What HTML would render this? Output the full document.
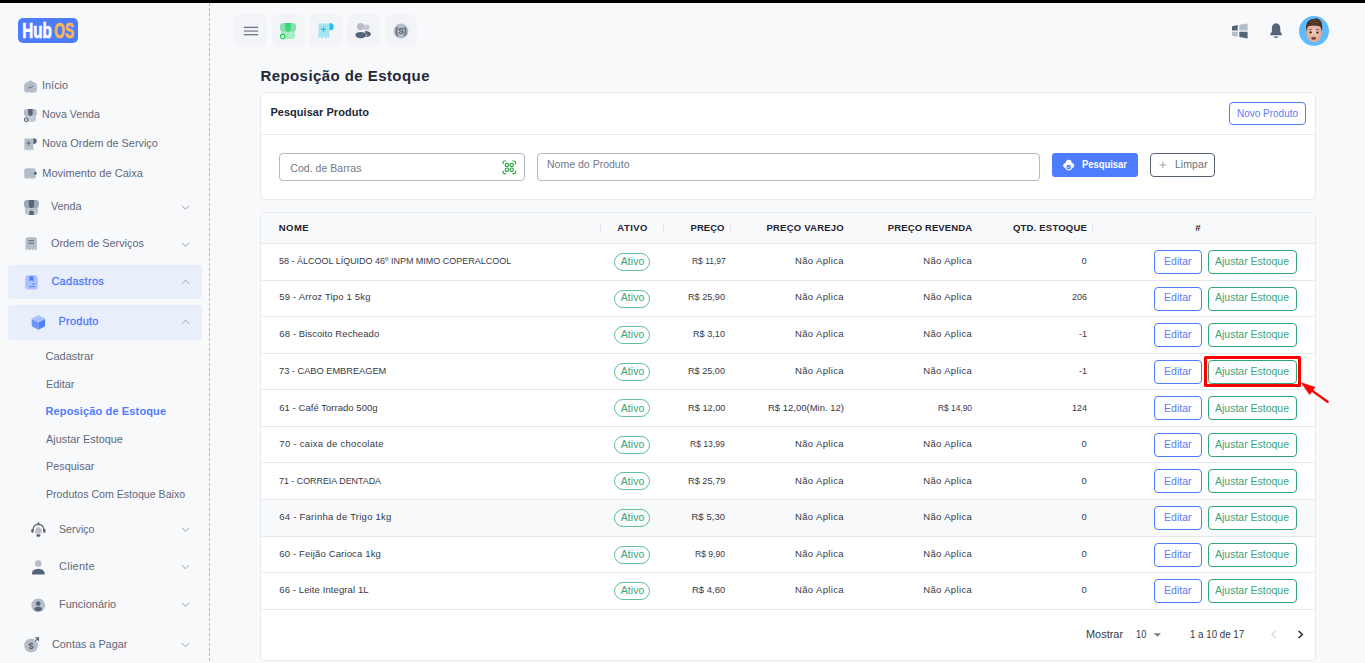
<!DOCTYPE html>
<html><head><meta charset="utf-8"><title>Reposição de Estoque</title>
<style>
html,body{margin:0;padding:0;}
body{width:1365px;height:663px;overflow:hidden;background:#f8f9fb;position:relative;font-family:"Liberation Sans",sans-serif;}
.t{position:absolute;white-space:pre;line-height:1;display:block;}
.r{position:absolute;box-sizing:border-box;display:block;}
</style></head><body>
<div class="r" style="left:0px;top:0px;width:1365px;height:3px;background:#000;"></div>
<div class="r" style="left:0px;top:3px;width:1365px;height:1px;background:#fdfdfe;"></div>
<div class="r" style="left:209px;top:3px;width:1px;height:660px;background:repeating-linear-gradient(to bottom,#b3bcc8 0,#b3bcc8 3px,transparent 3px,transparent 5px);"></div>
<div class="r" style="left:18px;top:18px;width:60px;height:25px;background:#4d7cfe;border-radius:5px;"></div>
<svg class="r" style="left:18px;top:18px" width="60" height="25" viewBox="0 0 60 25">
<text x="4.3" y="20.4" font-family="Liberation Sans" font-weight="700" font-size="22.4" fill="#fff" textLength="29.6" lengthAdjust="spacingAndGlyphs" stroke="#fff" stroke-width="0.7">Hub</text>
<text x="36.3" y="20.4" font-family="Liberation Sans" font-weight="700" font-size="22.4" fill="#ffb74d" textLength="19.8" lengthAdjust="spacingAndGlyphs" stroke="#ffb74d" stroke-width="0.7">OS</text>
</svg>
<span class="t" style="left:42.20px;top:80.00px;font-size:11px;font-weight:400;color:#626779;transform:scaleX(0.9928);transform-origin:0 0;">Início</span>
<span class="t" style="left:42.20px;top:109.00px;font-size:11px;font-weight:400;color:#626779;transform:scaleX(0.9661);transform-origin:0 0;">Nova Venda</span>
<span class="t" style="left:42.20px;top:138.00px;font-size:11px;font-weight:400;color:#626779;transform:scaleX(0.9866);transform-origin:0 0;">Nova Ordem de Serviço</span>
<span class="t" style="left:42.20px;top:168.00px;font-size:11px;font-weight:400;color:#626779;letter-spacing:0.030px;">Movimento de Caixa</span>
<span class="t" style="left:51.40px;top:201.00px;font-size:11px;font-weight:400;color:#626779;transform:scaleX(0.9776);transform-origin:0 0;">Venda</span>
<span class="t" style="left:51.40px;top:238.00px;font-size:11px;font-weight:400;color:#626779;transform:scaleX(0.9868);transform-origin:0 0;">Ordem de Serviços</span>
<div class="r" style="left:8px;top:265px;width:194px;height:34px;background:#e9eefb;border-radius:4px;"></div>
<span class="t" style="left:51.40px;top:276.00px;font-size:11px;font-weight:400;color:#4d7cfe;letter-spacing:0.285px;-webkit-text-stroke:0.3px #4d7cfe;">Cadastros</span>
<div class="r" style="left:8px;top:305px;width:194px;height:35px;background:#e9eefb;border-radius:4px;"></div>
<span class="t" style="left:58.50px;top:316.00px;font-size:11px;font-weight:400;color:#4d7cfe;letter-spacing:0.239px;-webkit-text-stroke:0.3px #4d7cfe;">Produto</span>
<span class="t" style="left:45.50px;top:351.00px;font-size:11px;font-weight:400;color:#626779;letter-spacing:0.001px;">Cadastrar</span>
<span class="t" style="left:45.50px;top:379.00px;font-size:11px;font-weight:400;color:#626779;transform:scaleX(0.9884);transform-origin:0 0;">Editar</span>
<span class="t" style="left:45.50px;top:406.00px;font-size:11px;font-weight:700;color:#4d7cfe;letter-spacing:0.137px;">Reposição de Estoque</span>
<span class="t" style="left:45.50px;top:434.00px;font-size:11px;font-weight:400;color:#626779;transform:scaleX(0.9903);transform-origin:0 0;">Ajustar Estoque</span>
<span class="t" style="left:45.50px;top:461.00px;font-size:11px;font-weight:400;color:#626779;transform:scaleX(0.9875);transform-origin:0 0;">Pesquisar</span>
<span class="t" style="left:45.50px;top:489.00px;font-size:11px;font-weight:400;color:#626779;transform:scaleX(0.9640);transform-origin:0 0;">Produtos Com Estoque Baixo</span>
<span class="t" style="left:59.10px;top:524.00px;font-size:11px;font-weight:400;color:#626779;transform:scaleX(0.9679);transform-origin:0 0;">Serviço</span>
<span class="t" style="left:59.10px;top:561.00px;font-size:11px;font-weight:400;color:#626779;letter-spacing:0.223px;">Cliente</span>
<span class="t" style="left:59.10px;top:599.00px;font-size:11px;font-weight:400;color:#626779;transform:scaleX(0.9953);transform-origin:0 0;">Funcionário</span>
<span class="t" style="left:51.70px;top:639.00px;font-size:11px;font-weight:400;color:#626779;transform:scaleX(0.9852);transform-origin:0 0;">Contas a Pagar</span>
<svg class="r" style="left:0;top:0" width="210" height="663"><path d="M182.0,205.7 L185.5,209.3 L189.0,205.7" fill="none" stroke="#9aa0ad" stroke-width="1"/></svg>
<svg class="r" style="left:0;top:0" width="210" height="663"><path d="M182.0,242.7 L185.5,246.3 L189.0,242.7" fill="none" stroke="#9aa0ad" stroke-width="1"/></svg>
<svg class="r" style="left:0;top:0" width="210" height="663"><path d="M182.0,283.8 L185.5,280.2 L189.0,283.8" fill="none" stroke="#9aa0ad" stroke-width="1"/></svg>
<svg class="r" style="left:0;top:0" width="210" height="663"><path d="M182.0,323.8 L185.5,320.2 L189.0,323.8" fill="none" stroke="#9aa0ad" stroke-width="1"/></svg>
<svg class="r" style="left:0;top:0" width="210" height="663"><path d="M182.0,527.9000000000001 L185.5,531.5 L189.0,527.9000000000001" fill="none" stroke="#9aa0ad" stroke-width="1"/></svg>
<svg class="r" style="left:0;top:0" width="210" height="663"><path d="M182.0,565.2 L185.5,568.8 L189.0,565.2" fill="none" stroke="#9aa0ad" stroke-width="1"/></svg>
<svg class="r" style="left:0;top:0" width="210" height="663"><path d="M182.0,602.7 L185.5,606.3 L189.0,602.7" fill="none" stroke="#9aa0ad" stroke-width="1"/></svg>
<svg class="r" style="left:0;top:0" width="210" height="663"><path d="M182.0,643.2 L185.5,646.8 L189.0,643.2" fill="none" stroke="#9aa0ad" stroke-width="1"/></svg>
<div class="r" style="left:234px;top:14px;width:33px;height:33px;background:#f3f4f7;border-radius:7px;"></div>
<div class="r" style="left:272px;top:14px;width:33px;height:33px;background:#f3f4f7;border-radius:7px;"></div>
<div class="r" style="left:309px;top:14px;width:33px;height:33px;background:#f3f4f7;border-radius:7px;"></div>
<div class="r" style="left:347px;top:14px;width:33px;height:33px;background:#f3f4f7;border-radius:7px;"></div>
<div class="r" style="left:385px;top:14px;width:32px;height:33px;background:#f3f4f7;border-radius:7px;"></div>
<span class="t" style="left:260.40px;top:68.00px;font-size:15px;font-weight:700;color:#232838;letter-spacing:0.432px;">Reposição de Estoque</span>
<div class="r" style="left:260px;top:92px;width:1056px;height:108px;background:#fff;border:1px solid #e7eaef;border-radius:5px;"></div>
<div class="r" style="left:261px;top:134px;width:1054px;height:1px;background:#e7eaef;"></div>
<span class="t" style="left:270.40px;top:107.00px;font-size:11px;font-weight:700;color:#232838;letter-spacing:0.042px;">Pesquisar Produto</span>
<div class="r" style="left:1229px;top:102px;width:77px;height:23px;border:1px solid #4d7cfe;border-radius:4px;background:#fff;"></div>
<span class="t" style="left:1237.40px;top:108.00px;font-size:10.5px;font-weight:400;color:#5b7dfa;transform:scaleX(0.9501);transform-origin:0 0;">Novo Produto</span>
<div class="r" style="left:279px;top:153px;width:246px;height:28px;border:1px solid #b2b9c6;border-radius:4px;background:#fff;"></div>
<span class="t" style="left:290.30px;top:163.00px;font-size:10.5px;font-weight:400;color:#737889;letter-spacing:0.042px;">Cod. de Barras</span>
<div class="r" style="left:537px;top:153px;width:503px;height:28px;border:1px solid #b2b9c6;border-radius:4px;background:#fff;"></div>
<span class="t" style="left:547.00px;top:159.00px;font-size:10.5px;font-weight:400;color:#737889;letter-spacing:0.014px;">Nome do Produto</span>
<div class="r" style="left:1052px;top:153px;width:86px;height:24px;background:#4d7cfe;border-radius:3px;"></div>
<span class="t" style="left:1081.90px;top:159.00px;font-size:10.5px;font-weight:700;color:#fff;transform:scaleX(0.8946);transform-origin:0 0;">Pesquisar</span>
<div class="r" style="left:1150px;top:153px;width:65px;height:24px;border:1px solid #566170;border-radius:4px;background:#fff;"></div>
<span class="t" style="left:1174.90px;top:159.00px;font-size:10.5px;font-weight:400;color:#6a7080;letter-spacing:0.085px;">Limpar</span>
<svg class="r" style="left:1158px;top:160px" width="10" height="10"><path d="M1.5,5 H8.1 M4.8,1.7 V8.3" stroke="#a2a6af" stroke-width="1.1" fill="none"/></svg>
<div class="r" style="left:260px;top:212px;width:1056px;height:449px;background:#fff;border:1px solid #e7eaef;border-radius:5px;"></div>
<div class="r" style="left:261px;top:213px;width:1054px;height:30px;background:#f8f9fb;border-radius:4px 4px 0 0;"></div>
<div class="r" style="left:261px;top:500px;width:1054px;height:36px;background:#f8f9fb;"></div>
<div class="r" style="left:261px;top:243px;width:1054px;height:1px;background:#e5e8ed;"></div>
<div class="r" style="left:261px;top:280px;width:1054px;height:1px;background:#e5e8ed;"></div>
<div class="r" style="left:261px;top:316px;width:1054px;height:1px;background:#e5e8ed;"></div>
<div class="r" style="left:261px;top:353px;width:1054px;height:1px;background:#e5e8ed;"></div>
<div class="r" style="left:261px;top:389px;width:1054px;height:1px;background:#e5e8ed;"></div>
<div class="r" style="left:261px;top:426px;width:1054px;height:1px;background:#e5e8ed;"></div>
<div class="r" style="left:261px;top:462px;width:1054px;height:1px;background:#e5e8ed;"></div>
<div class="r" style="left:261px;top:499px;width:1054px;height:1px;background:#e5e8ed;"></div>
<div class="r" style="left:261px;top:536px;width:1054px;height:1px;background:#e5e8ed;"></div>
<div class="r" style="left:261px;top:572px;width:1054px;height:1px;background:#e5e8ed;"></div>
<div class="r" style="left:261px;top:609px;width:1054px;height:1px;background:#e5e8ed;"></div>
<div class="r" style="left:600px;top:225px;width:1px;height:8px;background:#dfe3e8;"></div>
<div class="r" style="left:663px;top:225px;width:1px;height:8px;background:#dfe3e8;"></div>
<div class="r" style="left:730px;top:225px;width:1px;height:8px;background:#dfe3e8;"></div>
<div class="r" style="left:1092px;top:225px;width:1px;height:8px;background:#dfe3e8;"></div>
<span class="t" style="left:278.80px;top:223.00px;font-size:9.5px;font-weight:700;color:#1f2433;letter-spacing:0.425px;">NOME</span>
<span class="t" style="left:617.30px;top:223.00px;font-size:9.5px;font-weight:700;color:#1f2433;letter-spacing:0.455px;">ATIVO</span>
<span class="t" style="left:690.50px;top:223.00px;font-size:9.5px;font-weight:700;color:#1f2433;letter-spacing:0.043px;">PREÇO</span>
<span class="t" style="left:766.40px;top:223.00px;font-size:9.5px;font-weight:700;color:#1f2433;letter-spacing:0.235px;">PREÇO VAREJO</span>
<span class="t" style="left:887.80px;top:223.00px;font-size:9.5px;font-weight:700;color:#1f2433;letter-spacing:0.117px;">PREÇO REVENDA</span>
<span class="t" style="left:1012.90px;top:223.00px;font-size:9.5px;font-weight:700;color:#1f2433;letter-spacing:0.216px;">QTD. ESTOQUE</span>
<span class="t" style="left:1195.26px;top:223.00px;font-size:9.5px;font-weight:700;color:#1f2433;">#</span>
<span class="t" style="left:279.30px;top:256.00px;font-size:9.5px;font-weight:400;color:#353a49;transform:scaleX(0.9465);transform-origin:0 0;">58 - ÁLCOOL LÍQUIDO 46º INPM MIMO COPERALCOOL</span>
<div class="r" style="left:614px;top:253px;width:36px;height:18px;border:1px solid #62bfa0;border-radius:9px;background:transparent;"></div>
<span class="t" style="left:620.75px;top:256.00px;font-size:10.5px;font-weight:400;color:#3aa37d;letter-spacing:0.071px;">Ativo</span>
<span class="t" style="left:691.50px;top:256.00px;font-size:9.5px;font-weight:400;color:#353a49;transform:scaleX(0.8904);transform-origin:0 0;">R$ 11,97</span>
<span class="t" style="left:795.00px;top:256.00px;font-size:9.5px;font-weight:400;color:#353a49;letter-spacing:0.358px;">Não Aplica</span>
<span class="t" style="left:923.20px;top:256.00px;font-size:9.5px;font-weight:400;color:#353a49;letter-spacing:0.358px;">Não Aplica</span>
<span class="t" style="left:1081.50px;top:256.00px;font-size:9.5px;font-weight:400;color:#353a49;letter-spacing:0.217px;">0</span>
<div class="r" style="left:1154px;top:250px;width:48px;height:24px;border:1px solid #4d7cfe;border-radius:4px;background:#fff;"></div>
<span class="t" style="left:1164.10px;top:256.00px;font-size:11px;font-weight:400;color:#5b7dfa;transform:scaleX(0.9571);transform-origin:0 0;">Editar</span>
<div class="r" style="left:1208px;top:250px;width:89px;height:24px;border:1px solid #35a37b;border-radius:4px;background:#fff;"></div>
<span class="t" style="left:1215.40px;top:256.00px;font-size:11px;font-weight:400;color:#3aa37d;transform:scaleX(0.9530);transform-origin:0 0;">Ajustar Estoque</span>
<span class="t" style="left:279.30px;top:292.00px;font-size:9.5px;font-weight:400;color:#353a49;letter-spacing:0.179px;">59 - Arroz Tipo 1 5kg</span>
<div class="r" style="left:614px;top:290px;width:36px;height:18px;border:1px solid #62bfa0;border-radius:9px;background:transparent;"></div>
<span class="t" style="left:620.75px;top:292.00px;font-size:10.5px;font-weight:400;color:#3aa37d;letter-spacing:0.071px;">Ativo</span>
<span class="t" style="left:688.20px;top:292.00px;font-size:9.5px;font-weight:400;color:#353a49;transform:scaleX(0.9597);transform-origin:0 0;">R$ 25,90</span>
<span class="t" style="left:795.00px;top:292.00px;font-size:9.5px;font-weight:400;color:#353a49;letter-spacing:0.358px;">Não Aplica</span>
<span class="t" style="left:923.20px;top:292.00px;font-size:9.5px;font-weight:400;color:#353a49;letter-spacing:0.358px;">Não Aplica</span>
<span class="t" style="left:1072.00px;top:292.00px;font-size:9.5px;font-weight:400;color:#353a49;transform:scaleX(0.9465);transform-origin:0 0;">206</span>
<div class="r" style="left:1154px;top:287px;width:48px;height:24px;border:1px solid #4d7cfe;border-radius:4px;background:#fff;"></div>
<span class="t" style="left:1164.10px;top:292.00px;font-size:11px;font-weight:400;color:#5b7dfa;transform:scaleX(0.9571);transform-origin:0 0;">Editar</span>
<div class="r" style="left:1208px;top:287px;width:89px;height:24px;border:1px solid #35a37b;border-radius:4px;background:#fff;"></div>
<span class="t" style="left:1215.40px;top:292.00px;font-size:11px;font-weight:400;color:#3aa37d;transform:scaleX(0.9530);transform-origin:0 0;">Ajustar Estoque</span>
<span class="t" style="left:279.30px;top:329.00px;font-size:9.5px;font-weight:400;color:#353a49;letter-spacing:0.081px;">68 - Biscoito Recheado</span>
<div class="r" style="left:614px;top:326px;width:36px;height:18px;border:1px solid #62bfa0;border-radius:9px;background:transparent;"></div>
<span class="t" style="left:620.75px;top:329.00px;font-size:10.5px;font-weight:400;color:#3aa37d;letter-spacing:0.071px;">Ativo</span>
<span class="t" style="left:693.20px;top:329.00px;font-size:9.5px;font-weight:400;color:#353a49;transform:scaleX(0.9618);transform-origin:0 0;">R$ 3,10</span>
<span class="t" style="left:795.00px;top:329.00px;font-size:9.5px;font-weight:400;color:#353a49;letter-spacing:0.358px;">Não Aplica</span>
<span class="t" style="left:923.20px;top:329.00px;font-size:9.5px;font-weight:400;color:#353a49;letter-spacing:0.358px;">Não Aplica</span>
<span class="t" style="left:1079.00px;top:329.00px;font-size:9.5px;font-weight:400;color:#353a49;transform:scaleX(0.9472);transform-origin:0 0;">-1</span>
<div class="r" style="left:1154px;top:323px;width:48px;height:24px;border:1px solid #4d7cfe;border-radius:4px;background:#fff;"></div>
<span class="t" style="left:1164.10px;top:329.00px;font-size:11px;font-weight:400;color:#5b7dfa;transform:scaleX(0.9571);transform-origin:0 0;">Editar</span>
<div class="r" style="left:1208px;top:323px;width:89px;height:24px;border:1px solid #35a37b;border-radius:4px;background:#fff;"></div>
<span class="t" style="left:1215.40px;top:329.00px;font-size:11px;font-weight:400;color:#3aa37d;transform:scaleX(0.9530);transform-origin:0 0;">Ajustar Estoque</span>
<span class="t" style="left:279.30px;top:366.00px;font-size:9.5px;font-weight:400;color:#353a49;transform:scaleX(0.9725);transform-origin:0 0;">73 - CABO EMBREAGEM</span>
<div class="r" style="left:614px;top:363px;width:36px;height:18px;border:1px solid #62bfa0;border-radius:9px;background:transparent;"></div>
<span class="t" style="left:620.75px;top:366.00px;font-size:10.5px;font-weight:400;color:#3aa37d;letter-spacing:0.071px;">Ativo</span>
<span class="t" style="left:688.20px;top:366.00px;font-size:9.5px;font-weight:400;color:#353a49;transform:scaleX(0.9597);transform-origin:0 0;">R$ 25,00</span>
<span class="t" style="left:795.00px;top:366.00px;font-size:9.5px;font-weight:400;color:#353a49;letter-spacing:0.358px;">Não Aplica</span>
<span class="t" style="left:923.20px;top:366.00px;font-size:9.5px;font-weight:400;color:#353a49;letter-spacing:0.358px;">Não Aplica</span>
<span class="t" style="left:1079.00px;top:366.00px;font-size:9.5px;font-weight:400;color:#353a49;transform:scaleX(0.9472);transform-origin:0 0;">-1</span>
<div class="r" style="left:1154px;top:360px;width:48px;height:24px;border:1px solid #4d7cfe;border-radius:4px;background:#fff;"></div>
<span class="t" style="left:1164.10px;top:366.00px;font-size:11px;font-weight:400;color:#5b7dfa;transform:scaleX(0.9571);transform-origin:0 0;">Editar</span>
<div class="r" style="left:1208px;top:360px;width:89px;height:24px;border:1px solid #35a37b;border-radius:4px;background:#fff;"></div>
<span class="t" style="left:1215.40px;top:366.00px;font-size:11px;font-weight:400;color:#3aa37d;transform:scaleX(0.9530);transform-origin:0 0;">Ajustar Estoque</span>
<span class="t" style="left:279.30px;top:403.00px;font-size:9.5px;font-weight:400;color:#353a49;letter-spacing:0.036px;">61 - Café Torrado 500g</span>
<div class="r" style="left:614px;top:399px;width:36px;height:18px;border:1px solid #62bfa0;border-radius:9px;background:transparent;"></div>
<span class="t" style="left:620.75px;top:403.00px;font-size:10.5px;font-weight:400;color:#3aa37d;letter-spacing:0.071px;">Ativo</span>
<span class="t" style="left:687.70px;top:403.00px;font-size:9.5px;font-weight:400;color:#353a49;transform:scaleX(0.9727);transform-origin:0 0;">R$ 12,00</span>
<span class="t" style="left:768.00px;top:403.00px;font-size:9.5px;font-weight:400;color:#353a49;transform:scaleX(0.9996);transform-origin:0 0;">R$ 12,00(Min. 12)</span>
<span class="t" style="left:938.20px;top:403.00px;font-size:9.5px;font-weight:400;color:#353a49;transform:scaleX(0.8819);transform-origin:0 0;">R$ 14,90</span>
<span class="t" style="left:1072.00px;top:403.00px;font-size:9.5px;font-weight:400;color:#353a49;transform:scaleX(0.9465);transform-origin:0 0;">124</span>
<div class="r" style="left:1154px;top:396px;width:48px;height:24px;border:1px solid #4d7cfe;border-radius:4px;background:#fff;"></div>
<span class="t" style="left:1164.10px;top:403.00px;font-size:11px;font-weight:400;color:#5b7dfa;transform:scaleX(0.9571);transform-origin:0 0;">Editar</span>
<div class="r" style="left:1208px;top:396px;width:89px;height:24px;border:1px solid #35a37b;border-radius:4px;background:#fff;"></div>
<span class="t" style="left:1215.40px;top:403.00px;font-size:11px;font-weight:400;color:#3aa37d;transform:scaleX(0.9530);transform-origin:0 0;">Ajustar Estoque</span>
<span class="t" style="left:279.30px;top:439.00px;font-size:9.5px;font-weight:400;color:#353a49;letter-spacing:0.296px;">70 - caixa de chocolate</span>
<div class="r" style="left:614px;top:436px;width:36px;height:18px;border:1px solid #62bfa0;border-radius:9px;background:transparent;"></div>
<span class="t" style="left:620.75px;top:439.00px;font-size:10.5px;font-weight:400;color:#3aa37d;letter-spacing:0.071px;">Ativo</span>
<span class="t" style="left:690.40px;top:439.00px;font-size:9.5px;font-weight:400;color:#353a49;transform:scaleX(0.9026);transform-origin:0 0;">R$ 13,99</span>
<span class="t" style="left:795.00px;top:439.00px;font-size:9.5px;font-weight:400;color:#353a49;letter-spacing:0.358px;">Não Aplica</span>
<span class="t" style="left:923.20px;top:439.00px;font-size:9.5px;font-weight:400;color:#353a49;letter-spacing:0.358px;">Não Aplica</span>
<span class="t" style="left:1081.50px;top:439.00px;font-size:9.5px;font-weight:400;color:#353a49;letter-spacing:0.217px;">0</span>
<div class="r" style="left:1154px;top:433px;width:48px;height:24px;border:1px solid #4d7cfe;border-radius:4px;background:#fff;"></div>
<span class="t" style="left:1164.10px;top:439.00px;font-size:11px;font-weight:400;color:#5b7dfa;transform:scaleX(0.9571);transform-origin:0 0;">Editar</span>
<div class="r" style="left:1208px;top:433px;width:89px;height:24px;border:1px solid #35a37b;border-radius:4px;background:#fff;"></div>
<span class="t" style="left:1215.40px;top:439.00px;font-size:11px;font-weight:400;color:#3aa37d;transform:scaleX(0.9530);transform-origin:0 0;">Ajustar Estoque</span>
<span class="t" style="left:279.30px;top:476.00px;font-size:9.5px;font-weight:400;color:#353a49;transform:scaleX(0.9349);transform-origin:0 0;">71 - CORREIA DENTADA</span>
<div class="r" style="left:614px;top:472px;width:36px;height:18px;border:1px solid #62bfa0;border-radius:9px;background:transparent;"></div>
<span class="t" style="left:620.75px;top:476.00px;font-size:10.5px;font-weight:400;color:#3aa37d;letter-spacing:0.071px;">Ativo</span>
<span class="t" style="left:687.80px;top:476.00px;font-size:9.5px;font-weight:400;color:#353a49;transform:scaleX(0.9701);transform-origin:0 0;">R$ 25,79</span>
<span class="t" style="left:795.00px;top:476.00px;font-size:9.5px;font-weight:400;color:#353a49;letter-spacing:0.358px;">Não Aplica</span>
<span class="t" style="left:923.20px;top:476.00px;font-size:9.5px;font-weight:400;color:#353a49;letter-spacing:0.358px;">Não Aplica</span>
<span class="t" style="left:1081.50px;top:476.00px;font-size:9.5px;font-weight:400;color:#353a49;letter-spacing:0.217px;">0</span>
<div class="r" style="left:1154px;top:469px;width:48px;height:24px;border:1px solid #4d7cfe;border-radius:4px;background:#fff;"></div>
<span class="t" style="left:1164.10px;top:476.00px;font-size:11px;font-weight:400;color:#5b7dfa;transform:scaleX(0.9571);transform-origin:0 0;">Editar</span>
<div class="r" style="left:1208px;top:469px;width:89px;height:24px;border:1px solid #35a37b;border-radius:4px;background:#fff;"></div>
<span class="t" style="left:1215.40px;top:476.00px;font-size:11px;font-weight:400;color:#3aa37d;transform:scaleX(0.9530);transform-origin:0 0;">Ajustar Estoque</span>
<span class="t" style="left:279.30px;top:512.00px;font-size:9.5px;font-weight:400;color:#353a49;letter-spacing:0.247px;">64 - Farinha de Trigo 1kg</span>
<div class="r" style="left:614px;top:509px;width:36px;height:18px;border:1px solid #62bfa0;border-radius:9px;background:transparent;"></div>
<span class="t" style="left:620.75px;top:512.00px;font-size:10.5px;font-weight:400;color:#3aa37d;letter-spacing:0.071px;">Ativo</span>
<span class="t" style="left:691.40px;top:512.00px;font-size:9.5px;font-weight:400;color:#353a49;letter-spacing:0.076px;">R$ 5,30</span>
<span class="t" style="left:795.00px;top:512.00px;font-size:9.5px;font-weight:400;color:#353a49;letter-spacing:0.358px;">Não Aplica</span>
<span class="t" style="left:923.20px;top:512.00px;font-size:9.5px;font-weight:400;color:#353a49;letter-spacing:0.358px;">Não Aplica</span>
<span class="t" style="left:1081.50px;top:512.00px;font-size:9.5px;font-weight:400;color:#353a49;letter-spacing:0.217px;">0</span>
<div class="r" style="left:1154px;top:506px;width:48px;height:24px;border:1px solid #4d7cfe;border-radius:4px;background:#fff;"></div>
<span class="t" style="left:1164.10px;top:512.00px;font-size:11px;font-weight:400;color:#5b7dfa;transform:scaleX(0.9571);transform-origin:0 0;">Editar</span>
<div class="r" style="left:1208px;top:506px;width:89px;height:24px;border:1px solid #35a37b;border-radius:4px;background:#fff;"></div>
<span class="t" style="left:1215.40px;top:512.00px;font-size:11px;font-weight:400;color:#3aa37d;transform:scaleX(0.9530);transform-origin:0 0;">Ajustar Estoque</span>
<span class="t" style="left:279.30px;top:549.00px;font-size:9.5px;font-weight:400;color:#353a49;letter-spacing:0.152px;">60 - Feijão Carioca 1kg</span>
<div class="r" style="left:614px;top:546px;width:36px;height:18px;border:1px solid #62bfa0;border-radius:9px;background:transparent;"></div>
<span class="t" style="left:620.75px;top:549.00px;font-size:10.5px;font-weight:400;color:#3aa37d;letter-spacing:0.071px;">Ativo</span>
<span class="t" style="left:695.20px;top:549.00px;font-size:9.5px;font-weight:400;color:#353a49;transform:scaleX(0.9017);transform-origin:0 0;">R$ 9,90</span>
<span class="t" style="left:795.00px;top:549.00px;font-size:9.5px;font-weight:400;color:#353a49;letter-spacing:0.358px;">Não Aplica</span>
<span class="t" style="left:923.20px;top:549.00px;font-size:9.5px;font-weight:400;color:#353a49;letter-spacing:0.358px;">Não Aplica</span>
<span class="t" style="left:1081.50px;top:549.00px;font-size:9.5px;font-weight:400;color:#353a49;letter-spacing:0.217px;">0</span>
<div class="r" style="left:1154px;top:543px;width:48px;height:24px;border:1px solid #4d7cfe;border-radius:4px;background:#fff;"></div>
<span class="t" style="left:1164.10px;top:549.00px;font-size:11px;font-weight:400;color:#5b7dfa;transform:scaleX(0.9571);transform-origin:0 0;">Editar</span>
<div class="r" style="left:1208px;top:543px;width:89px;height:24px;border:1px solid #35a37b;border-radius:4px;background:#fff;"></div>
<span class="t" style="left:1215.40px;top:549.00px;font-size:11px;font-weight:400;color:#3aa37d;transform:scaleX(0.9530);transform-origin:0 0;">Ajustar Estoque</span>
<span class="t" style="left:279.30px;top:585.00px;font-size:9.5px;font-weight:400;color:#353a49;letter-spacing:0.103px;">66 - Leite Integral 1L</span>
<div class="r" style="left:614px;top:582px;width:36px;height:18px;border:1px solid #62bfa0;border-radius:9px;background:transparent;"></div>
<span class="t" style="left:620.75px;top:585.00px;font-size:10.5px;font-weight:400;color:#3aa37d;letter-spacing:0.071px;">Ativo</span>
<span class="t" style="left:692.00px;top:585.00px;font-size:9.5px;font-weight:400;color:#353a49;transform:scaleX(0.9979);transform-origin:0 0;">R$ 4,80</span>
<span class="t" style="left:795.00px;top:585.00px;font-size:9.5px;font-weight:400;color:#353a49;letter-spacing:0.358px;">Não Aplica</span>
<span class="t" style="left:923.20px;top:585.00px;font-size:9.5px;font-weight:400;color:#353a49;letter-spacing:0.358px;">Não Aplica</span>
<span class="t" style="left:1081.50px;top:585.00px;font-size:9.5px;font-weight:400;color:#353a49;letter-spacing:0.217px;">0</span>
<div class="r" style="left:1154px;top:579px;width:48px;height:24px;border:1px solid #4d7cfe;border-radius:4px;background:#fff;"></div>
<span class="t" style="left:1164.10px;top:585.00px;font-size:11px;font-weight:400;color:#5b7dfa;transform:scaleX(0.9571);transform-origin:0 0;">Editar</span>
<div class="r" style="left:1208px;top:579px;width:89px;height:24px;border:1px solid #35a37b;border-radius:4px;background:#fff;"></div>
<span class="t" style="left:1215.40px;top:585.00px;font-size:11px;font-weight:400;color:#3aa37d;transform:scaleX(0.9530);transform-origin:0 0;">Ajustar Estoque</span>
<div class="r" style="left:1204px;top:356px;width:97px;height:31px;border:3px solid #fe0000;border-radius:1.5px;"></div>
<svg class="r" style="left:1290px;top:375px" width="50" height="40"><path d="M37.6,26.8 L22,15.6" stroke="#fe0000" stroke-width="2.4" stroke-linecap="round" fill="none"/><path d="M11.3,7.8 L25,12.2 L19.6,19.6 Z" fill="#fe0000" stroke="#fe0000" stroke-width="0.6" stroke-linejoin="round"/></svg>
<span class="t" style="left:1086.20px;top:629.00px;font-size:11px;font-weight:400;color:#333847;transform:scaleX(0.9952);transform-origin:0 0;">Mostrar</span>
<span class="t" style="left:1136.30px;top:629.00px;font-size:11px;font-weight:400;color:#333847;transform:scaleX(0.8419);transform-origin:0 0;">10</span>
<svg class="r" style="left:1153px;top:632px" width="10" height="6"><path d="M0.8,1.3 H8 L4.4,4.8 Z" fill="#777c88"/></svg>
<span class="t" style="left:1189.60px;top:629.00px;font-size:11px;font-weight:400;color:#333847;transform:scaleX(0.8846);transform-origin:0 0;">1 a 10 de 17</span>
<svg class="r" style="left:1268px;top:628px" width="40" height="14"><path d="M7.6,3 L3.8,6.5 L7.6,10" fill="none" stroke="#d3d7de" stroke-width="1.2"/><path d="M30.6,3 L34.4,6.5 L30.6,10" fill="none" stroke="#1d212c" stroke-width="1.4"/></svg>
<svg class="r" style="left:234px;top:14px" width="33" height="33" viewBox="0 0 33 33"><path d="M9.8,13.4 H24.2" stroke="#6b7585" stroke-width="1.3"/><path d="M9.8,17.1 H24.2" stroke="#8a93a2" stroke-width="1.5"/><path d="M9.8,20.7 H24.2" stroke="#6b7585" stroke-width="1.3"/></svg>
<svg class="r" style="left:279.7px;top:23px;overflow:visible" width="16.0" height="16.0" viewBox="0 0 16 16"><path d="M1,7.5 H15 V12.5 Q15,16 11.5,16 H4.5 Q1,16 1,12.5Z" fill="#a9ecc6"/><path d="M3.5,0 H12.5 Q16,0 16,3.5 V5.5 Q16,8.5 13,8.5 H3 Q0,8.5 0,5.5 V3.5 Q0,0 3.5,0Z" fill="#88e0ab"/><path d="M5.2,0 H10.8 V6 Q10.8,8.7 8,8.7 Q5.2,8.7 5.2,6Z" fill="#3ad67a"/><circle cx="2.7" cy="13.4" r="2.2" fill="#fff" stroke="#2fd06b" stroke-width="1.4"/><circle cx="2.7" cy="13.4" r="0.55" fill="#2fd06b"/></svg>
<svg class="r" style="left:318px;top:23px;overflow:visible" width="15.68" height="15.68" viewBox="0 0 16 16"><path d="M0.5,0.6 H11.6 V16 L9.75,14 L7.9,16 L6.05,14 L4.2,16 L2.35,14 L0.5,16Z" fill="#a6e4f0"/><path d="M11.6,0.3 H13 Q16,0.6 16,3.8 Q16,7.2 13,7.4 H11.6Z" fill="#27c3e6"/><path d="M3,6.5 H8.4 M5.7,3.8 V9.2" stroke="#27c3e6" stroke-width="1.1"/></svg>
<svg class="r" style="left:347px;top:14px" width="33" height="33" viewBox="0 0 33 33"><circle cx="19.6" cy="13.4" r="2.8" fill="#c3c9d3"/><path d="M18,17 Q24,17.2 23.8,20.2 Q23.6,22.8 18.5,23 Z" fill="#566576"/><circle cx="13.6" cy="12.6" r="3.6" fill="#b5bdc9"/><ellipse cx="13.8" cy="21.1" rx="6.1" ry="3.5" fill="#f1f2f5"/><ellipse cx="13.8" cy="21.1" rx="5.5" ry="3.2" fill="#566576"/></svg>
<svg class="r" style="left:384px;top:14px" width="33" height="33" viewBox="0 0 33 33"><circle cx="17" cy="17" r="7.4" fill="#b5bdc9"/><text x="17" y="20" text-anchor="middle" font-family="Liberation Sans" font-weight="700" font-size="8.6" fill="#566576" stroke="#566576" stroke-width="0.15">(S)</text></svg>
<svg class="r" style="left:1230px;top:22px" width="20" height="18" viewBox="0 0 20 18"><path d="M2,4.2 L7.7,3 V8.4 H2Z" fill="#566576"/><path d="M9.3,2.7 L17.6,1.4 V8.4 H9.3Z" fill="#b5bdc9"/><path d="M2,9.8 H7.7 V14.8 L2,13.8Z" fill="#b5bdc9"/><path d="M9.3,9.8 H17.6 V16.4 L9.3,15.1Z" fill="#566576"/></svg>
<svg class="r" style="left:1268px;top:22px" width="16" height="18" viewBox="0 0 16 18"><path d="M8.1,1.3 Q12.2,1.6 12.3,6.5 V9.5 L13.9,12.3 V13.2 H2.3 V12.3 L3.9,9.5 V6.5 Q4,1.6 8.1,1.3Z" fill="#566576"/><path d="M5.9,14.5 H10.3 Q9.8,16 8.1,16 Q6.4,16 5.9,14.5Z" fill="#566576"/></svg>
<svg class="r" style="left:1299px;top:16px" width="30" height="30" viewBox="0 0 30 30"><defs><clipPath id="av"><circle cx="15" cy="15" r="15"/></clipPath>
<radialGradient id="sk" cx="0.5" cy="0.45" r="0.6"><stop offset="0" stop-color="#f3cdbb"/><stop offset="1" stop-color="#d9a48d"/></radialGradient></defs>
<circle cx="15" cy="15" r="15" fill="#5fbbff"/>
<g clip-path="url(#av)">
<path d="M7.6,15.2 Q6.2,15.2 6.5,17.2 Q6.9,19.3 8.2,19Z" fill="#d39f88"/><path d="M22.4,15.2 Q23.8,15.2 23.5,17.2 Q23.1,19.3 21.8,19Z" fill="#d39f88"/>
<path d="M7.7,12 Q7.7,8 15,8 Q22.3,8 22.3,12 V17.2 Q22.3,22.4 19.6,24.6 Q17.4,26.2 15,26.2 Q12.6,26.2 10.4,24.6 Q7.7,22.4 7.7,17.2Z" fill="url(#sk)"/>
<path d="M7.5,15.4 Q5.9,7.4 10,4.6 Q12.4,2.4 16,2.8 Q17.2,1.6 18.6,2.6 Q21.4,3.4 22.6,6.6 Q24,10.4 22.7,15.4 Q22.2,11.6 20.8,10.2 Q15,8.6 9.2,10.2 Q7.9,11.6 7.5,15.4Z" fill="#4d3327"/>
<path d="M10.5,6.5 Q13,4.2 16.5,4.6 M13,8 Q16,5.6 20,6.6" stroke="#6b4a38" stroke-width="0.8" fill="none"/>
<ellipse cx="11.6" cy="16.4" rx="1.15" ry="1.05" fill="#2a1c16"/><ellipse cx="18.4" cy="16.6" rx="1.15" ry="1.05" fill="#2a1c16"/>
<path d="M9.7,13.9 Q11.4,12.8 13.2,13.7" stroke="#6a4b3c" stroke-width="0.8" fill="none"/><path d="M16.8,13.7 Q18.6,12.8 20.3,13.9" stroke="#6a4b3c" stroke-width="0.8" fill="none"/>
<path d="M12,21.6 Q15,21 17.3,21.6 Q16.9,24 14.7,24 Q12.5,24 12,21.6Z" fill="#5b342a"/><path d="M12.8,23 Q14.7,22.4 16.5,23 Q15.8,24 14.7,24 Q13.5,24 12.8,23Z" fill="#b0675c"/>
<path d="M14,19.4 Q15,20 16,19.4" stroke="#c48f78" stroke-width="0.7" fill="none"/>
</g></svg>
<svg class="r" style="left:24px;top:80px" width="13" height="13" viewBox="0 0 13 13"><path d="M6.5,0.2 L11.6,3.2 Q12.9,4 12.9,5.5 V9.8 Q12.9,12.6 10.1,12.6 H2.9 Q0.1,12.6 0.1,9.8 V5.5 Q0.1,4 1.4,3.2Z" fill="#b5bdc9"/><path d="M4,8.4 L5.6,6.9 L6.9,7.8 L9,5.9" stroke="#566576" stroke-width="0.9" fill="none"/></svg>
<svg class="r" style="left:24.2px;top:109px;overflow:visible" width="12.8" height="12.8" viewBox="0 0 16 16"><path d="M1,7.5 H15 V12.5 Q15,16 11.5,16 H4.5 Q1,16 1,12.5Z" fill="#c3c9d2"/><path d="M3.5,0 H12.5 Q16,0 16,3.5 V5.5 Q16,8.5 13,8.5 H3 Q0,8.5 0,5.5 V3.5 Q0,0 3.5,0Z" fill="#b0b8c4"/><path d="M5.2,0 H10.8 V6 Q10.8,8.7 8,8.7 Q5.2,8.7 5.2,6Z" fill="#566576"/><circle cx="2.7" cy="13.4" r="2.2" fill="#fff" stroke="#566576" stroke-width="1.4"/><circle cx="2.7" cy="13.4" r="0.55" fill="#566576"/></svg>
<svg class="r" style="left:24.3px;top:138px;overflow:visible" width="12.8" height="12.8" viewBox="0 0 16 16"><path d="M0.5,0.6 H11.6 V16 L9.75,14 L7.9,16 L6.05,14 L4.2,16 L2.35,14 L0.5,16Z" fill="#b5bdc9"/><path d="M11.6,0.3 H13 Q16,0.6 16,3.8 Q16,7.2 13,7.4 H11.6Z" fill="#566576"/><path d="M3,6.5 H8.4 M5.7,3.8 V9.2" stroke="#566576" stroke-width="1.1"/></svg>
<svg class="r" style="left:24px;top:168px" width="14" height="11" viewBox="0 0 14 11"><rect x="0.2" y="0.2" width="11.6" height="10.4" rx="2.6" fill="#b5bdc9"/><circle cx="11.3" cy="5.3" r="1.5" fill="#566576"/></svg>
<svg class="r" style="left:24px;top:199.5px;overflow:visible" width="14.88" height="14.88" viewBox="0 0 16 16"><path d="M1,7.5 H15 V12.5 Q15,16 11.5,16 H4.5 Q1,16 1,12.5Z" fill="#bcc3cd"/><path d="M3.5,0 H12.5 Q16,0 16,3.5 V5.5 Q16,8.5 13,8.5 H3 Q0,8.5 0,5.5 V3.5 Q0,0 3.5,0Z" fill="#9ca6b4"/><path d="M5.2,0 H10.8 V6 Q10.8,8.7 8,8.7 Q5.2,8.7 5.2,6Z" fill="#566576"/><path d="M5.6,16 V13 Q5.6,11.2 8,11.2 Q10.4,11.2 10.4,13 V16Z" fill="#566576"/></svg>
<svg class="r" style="left:25px;top:237px" width="13" height="14" viewBox="0 0 13 14"><path d="M2.6,0.3 H9.8 Q11.9,0.3 11.9,2.4 V13.4 L9.9,12 L8,13.4 L6.2,12 L4.4,13.4 L2.5,12 L0.5,13.4 V2.4 Q0.5,0.3 2.6,0.3Z" fill="#b5bdc9"/><path d="M3.3,3.7 H9.1 M3.3,6.3 H9.1" stroke="#566576" stroke-width="1.1"/></svg>
<svg class="r" style="left:25px;top:274.6px" width="13" height="15" viewBox="0 0 13 15"><rect x="0.2" y="0.2" width="12.6" height="14.2" rx="3" fill="#a9c2fe"/><path d="M4.4,1.2 H8.4 V6.6 L6.4,5.1 L4.4,6.6Z" fill="#4d7cfe"/><path d="M7,9 H10.2 M4,11.6 H10.2" stroke="#4d7cfe" stroke-width="0.9"/></svg>
<svg class="r" style="left:31px;top:314.5px" width="15" height="15" viewBox="0 0 15 15"><path d="M7.4,0.4 L14,3.8 L7.4,7.4 L0.8,3.8Z" fill="#a9c2fe" stroke="#a9c2fe" stroke-width="0.6" stroke-linejoin="round"/><path d="M0.7,4 L7.4,7.4 V14.7 L1.6,11.8 Q0.7,11.3 0.7,10.3Z" fill="#6d97fe"/><path d="M14.1,4 L7.4,7.4 V14.7 L13.2,11.8 Q14.1,11.3 14.1,10.3Z" fill="#5080fe"/></svg>
<svg class="r" style="left:31px;top:522px" width="15" height="16" viewBox="0 0 15 16"><path d="M2,8.2 Q2,2.6 7.4,2.4 Q12.8,2.6 12.8,8.2" stroke="#566576" stroke-width="1.1" fill="none"/><circle cx="7.4" cy="1.4" r="1.1" fill="#566576"/><rect x="0.3" y="6.8" width="2.4" height="4" rx="1.1" fill="#566576"/><rect x="12.1" y="6.8" width="2.4" height="4" rx="1.1" fill="#566576"/><path d="M7.4,4.6 L10.6,7.6 V11.6 H4.2 V7.6Z" fill="#b5bdc9"/><rect x="5.5" y="12.2" width="3.8" height="2.6" rx="0.8" fill="#566576"/></svg>
<svg class="r" style="left:31px;top:560px" width="15" height="15" viewBox="0 0 15 15"><circle cx="7.3" cy="3.6" r="3.3" fill="#b5bdc9"/><path d="M0.8,14.6 Q0.8,9 7.3,8.8 Q13.8,9 13.8,14.6Z" fill="#566576"/></svg>
<svg class="r" style="left:31px;top:598px" width="15" height="15" viewBox="0 0 15 15"><circle cx="7.2" cy="7.3" r="6.9" fill="#b5bdc9"/><circle cx="7.2" cy="5.6" r="2.3" fill="#566576"/><path d="M3.2,11.6 Q3.4,8.8 7.2,8.8 Q11,8.8 11.2,11.6 Q9.6,13.2 7.2,13.2 Q4.8,13.2 3.2,11.6Z" fill="#566576"/></svg>
<svg class="r" style="left:24px;top:637px" width="16" height="16" viewBox="0 0 16 16"><circle cx="7.1" cy="8.5" r="6.9" fill="#b5bdc9"/><text x="7" y="11.8" text-anchor="middle" font-family="Liberation Sans" font-weight="700" font-size="9" fill="#566576">$</text><path d="M10.6,4.8 L14.2,1.2 M11.2,0.9 H14.5 V4.2" stroke="#f8f9fb" stroke-width="2.4" fill="none"/><path d="M10.6,4.8 L14.2,1.2 M11.2,0.9 H14.5 V4.2" stroke="#566576" stroke-width="1.1" fill="none"/></svg>
<svg class="r" style="left:502px;top:160px" width="15" height="15" viewBox="0 0 15 15"><path d="M1,4.2 V2.6 Q1,1 2.6,1 H4.2 M10.4,1 H12 Q13.6,1 13.6,2.6 V4.2 M13.6,10.4 V12 Q13.6,13.6 12,13.6 H10.4 M4.2,13.6 H2.6 Q1,13.6 1,12 V10.4" stroke="#2aa745" stroke-width="1.15" fill="none"/><circle cx="4.9" cy="5" r="1.7" stroke="#2aa745" stroke-width="1.15" fill="none"/><circle cx="9.7" cy="5" r="1.7" stroke="#2aa745" stroke-width="1.15" fill="none"/><circle cx="4.9" cy="9.7" r="1.7" stroke="#2aa745" stroke-width="1.15" fill="none"/><circle cx="9.7" cy="9.7" r="1.7" stroke="#2aa745" stroke-width="1.15" fill="none"/></svg>
<svg class="r" style="left:1062.6px;top:158.7px" width="12.2" height="12.2" viewBox="0 0 13 13"><circle cx="6.1" cy="4" r="3.2" fill="#fff"/><circle cx="3" cy="7" r="2.7" fill="#fff"/><circle cx="9.2" cy="7" r="2.7" fill="#fff"/><rect x="3" y="5" width="6.2" height="4.7" fill="#fff"/><circle cx="6.1" cy="8.7" r="3" fill="#4d7cfe" stroke="#fff" stroke-width="1.1"/><path d="M4.8,8.7 L5.8,9.7 L7.5,7.8" stroke="#fff" stroke-width="0.9" fill="none"/></svg>
</body></html>
